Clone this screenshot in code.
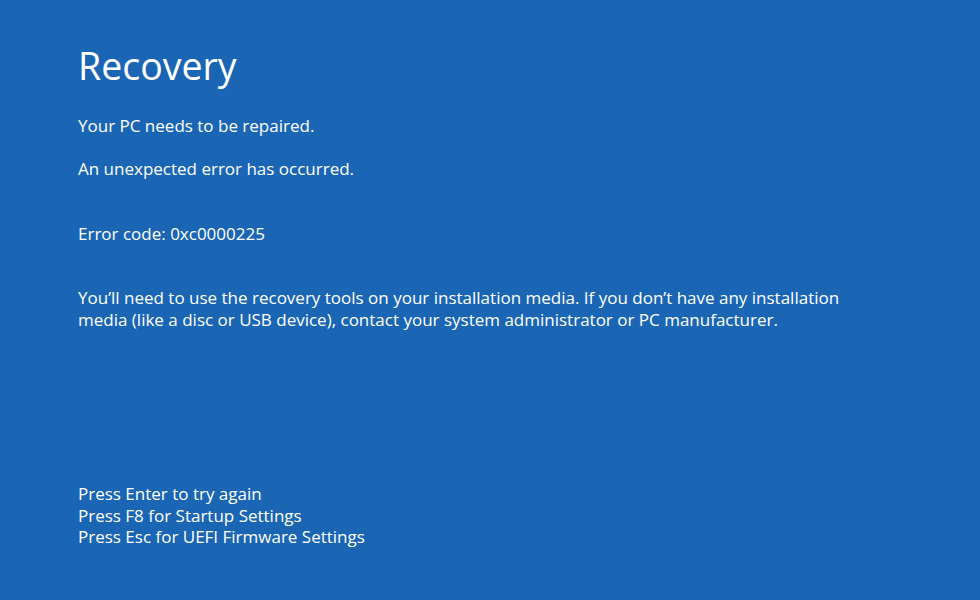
const App = () => {
  return (
    <div
      className="w-[980px] h-[600px] bg-[#1a66b4] text-white pl-[78px] overflow-hidden"
      style={{ fontFamily: '"Open Sans", "Noto Sans", sans-serif' }}
    >
      {/* Title */}
      <h1 className="pt-[39px] text-[37.5px] leading-[54px] font-normal">Recovery</h1>

      {/* Messages */}
      <div className="mt-[22px] text-[17px] leading-[22px]">
        <p>Your PC needs to be repaired.</p>
        <p className="mt-[21px]">An unexpected error has occurred.</p>
        <p className="mt-[43px]">Error code: 0xc0000225</p>
        <p className="mt-[42px] w-[790px]">
          You’ll need to use the recovery tools on your installation media. If you don’t have any installation
          media (like a disc or USB device), contact your system administrator or PC manufacturer.
        </p>
      </div>

      {/* Key options */}
      <div className="mt-[152px] text-[17px] leading-[21.5px]">
        <p>Press Enter to try again</p>
        <p>Press F8 for Startup Settings</p>
        <p>Press Esc for UEFI Firmware Settings</p>
      </div>
    </div>
  )
}

export default App
